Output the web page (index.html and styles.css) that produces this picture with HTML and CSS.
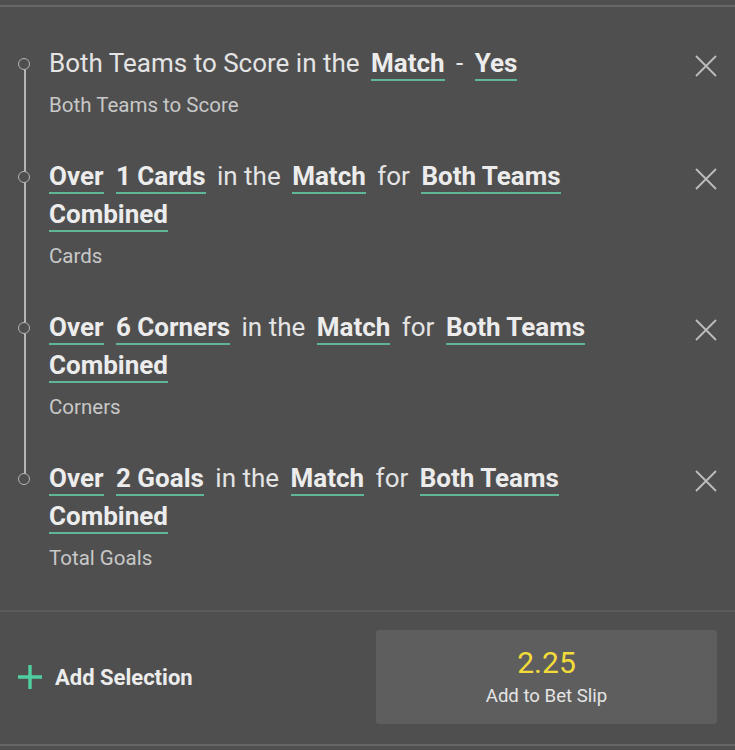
FILE: index.html
```html
<!DOCTYPE html>
<html lang="en">
<head>
    <meta charset="UTF-8">
    <meta name="viewport" content="width=device-width, initial-scale=1.0">
    <title>Bet Builder</title>
    <link rel="stylesheet" href="styles.css">
</head>
<body>

<div class="panel">
    <ul class="legs">
        <li class="leg">
            <div class="leg-text">
                <div class="leg-title"><span>Both Teams to Score in the</span> <b>Match</b> <span>-</span> <b>Yes</b></div>
                <div class="leg-market">Both Teams to Score</div>
            </div>
            <button class="remove" type="button" aria-label="Remove">
                <svg width="22" height="22" viewBox="0 0 22 22"><path d="M1 1 L21 21 M21 1 L1 21" stroke="#bdbdbd" stroke-width="1.8" fill="none"/></svg>
            </button>
        </li>
        <li class="leg">
            <div class="leg-text">
                <div class="leg-title"><b>Over</b> <b>1 Cards</b> <span>in the</span> <b>Match</b> <span>for</span> <b>Both Teams</b> <b class="wrapped">Combined</b></div>
                <div class="leg-market">Cards</div>
            </div>
            <button class="remove" type="button" aria-label="Remove">
                <svg width="22" height="22" viewBox="0 0 22 22"><path d="M1 1 L21 21 M21 1 L1 21" stroke="#bdbdbd" stroke-width="1.8" fill="none"/></svg>
            </button>
        </li>
        <li class="leg">
            <div class="leg-text">
                <div class="leg-title"><b>Over</b> <b>6 Corners</b> <span>in the</span> <b>Match</b> <span>for</span> <b>Both Teams</b> <b class="wrapped">Combined</b></div>
                <div class="leg-market">Corners</div>
            </div>
            <button class="remove" type="button" aria-label="Remove">
                <svg width="22" height="22" viewBox="0 0 22 22"><path d="M1 1 L21 21 M21 1 L1 21" stroke="#bdbdbd" stroke-width="1.8" fill="none"/></svg>
            </button>
        </li>
        <li class="leg">
            <div class="leg-text">
                <div class="leg-title"><b>Over</b> <b>2 Goals</b> <span>in the</span> <b>Match</b> <span>for</span> <b>Both Teams</b> <b class="wrapped">Combined</b></div>
                <div class="leg-market">Total Goals</div>
            </div>
            <button class="remove" type="button" aria-label="Remove">
                <svg width="22" height="22" viewBox="0 0 22 22"><path d="M1 1 L21 21 M21 1 L1 21" stroke="#bdbdbd" stroke-width="1.8" fill="none"/></svg>
            </button>
        </li>
    </ul>

    <div class="footer">
        <button class="add-selection" type="button">
            <svg width="24" height="24" viewBox="0 0 24 24"><path d="M12 0 V24 M0 12 H24" stroke="#4fcf9f" stroke-width="3.4" fill="none"/></svg>
            Add Selection
        </button>
        <button class="add-slip" type="button">
            <span class="odds">2.25</span>
            <span class="slip-label">Add to Bet Slip</span>
        </button>
    </div>
</div>

</body>
</html>
```

FILE: styles.css
```css
body {
    margin: 0;
    background-color: #4f4f4f;
    font-family: Roboto, "Liberation Sans", sans-serif;
    color: #e6e6e6;
}
.panel {
    border-top: 2px solid #676767;
    margin-top: 5px;
}
.legs {
    list-style: none;
    margin: 0;
    padding: 37px 18px 0 49px;
    position: relative;
}
.legs::before {
    content: "";
    position: absolute;
    left: 24px;
    top: 62px;
    height: 410px;
    width: 2px;
    background: #b5b5b5;
}
.leg {
    display: flex;
    align-items: flex-start;
    padding-bottom: 39px;
    position: relative;
}
.leg::before {
    content: "";
    position: absolute;
    left: -31px;
    top: 14px;
    width: 10px;
    height: 10px;
    border: 1.8px solid #b5b5b5;
    border-radius: 50%;
    background: #4f4f4f;
}
.leg-text {
    flex: 1;
    padding-right: 90px;
}
.leg-title {
    font-size: 26px;
    line-height: 38px;
    color: #e4e4e4;
}
.leg-title span {
    margin: 0 2px;
}
.leg-title b {
    margin: 0 3px;
    font-weight: 700;
    color: #ececec;
    border-bottom: 2px solid #5fb796;
    padding-bottom: 1px;
}
.leg-title :first-child,
.leg-title b.wrapped {
    margin-left: 0;
}
.leg-market {
    font-size: 20.5px;
    line-height: 26px;
    margin-top: 10px;
    color: #c8c8c8;
}
.remove {
    background: none;
    border: none;
    padding: 0;
    margin-top: 11px;
    cursor: pointer;
    line-height: 0;
}
.footer {
    border-top: 2px solid #5c5c5c;
    border-bottom: 2px solid #676767;
    display: flex;
    align-items: center;
    justify-content: space-between;
    padding: 18px 18px 20px 18px;
}
.add-selection {
    background: none;
    border: none;
    padding: 0;
    display: flex;
    align-items: center;
    gap: 13px;
    font-family: Roboto, "Liberation Sans", sans-serif;
    font-size: 22px;
    font-weight: 700;
    color: #ececec;
    cursor: pointer;
}
.add-slip {
    width: 341px;
    height: 94px;
    background: #5e5e5e;
    border: none;
    border-radius: 3px;
    display: flex;
    flex-direction: column;
    align-items: center;
    justify-content: center;
    font-family: Roboto, "Liberation Sans", sans-serif;
    cursor: pointer;
}
.odds {
    font-size: 30px;
    color: #f3dc3a;
    line-height: 34px;
}
.slip-label {
    font-size: 18.6px;
    color: #e4e4e4;
    line-height: 24px;
    margin-top: 4px;
}
```
